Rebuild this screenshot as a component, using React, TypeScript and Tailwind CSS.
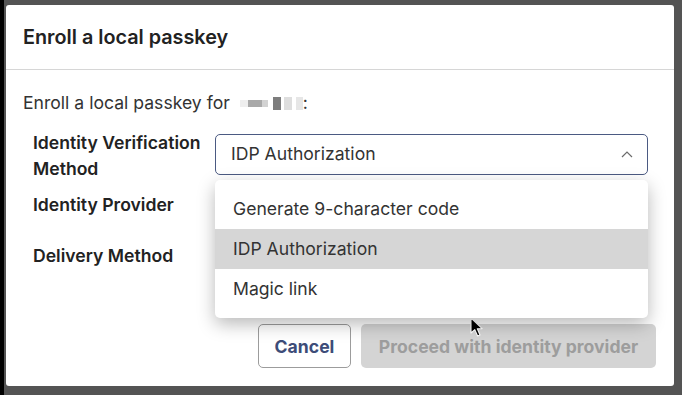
import React from 'react';

const OPTIONS = ['Generate 9-character code', 'IDP Authorization', 'Magic link'];

const ChevronUp = () => (
  <svg className="w-[12px] h-[7px]" viewBox="0 0 12 7" fill="none" stroke="#6b6b6b" strokeWidth="1.2">
    <path d="M1 6 L6 1 L11 6" />
  </svg>
);

const Cursor = () => (
  <svg className="absolute left-[466px] top-[317px] w-[14px] h-[21px]" viewBox="0 0 14 21">
    <path d="M1 1 L1 16 L4.8 12.6 L7.6 19 L10 18 L7.3 11.8 L12.2 11.6 Z" fill="#000" stroke="#fff" strokeWidth="1.1" strokeLinejoin="round" />
  </svg>
);

const App: React.FC = () => {
  return (
    <div className="relative w-[682px] h-[395px] bg-[#545454] border-l-[4px] border-black pl-[2px] pt-[5px] pr-[8px] pb-[9px] overflow-hidden font-['Inter',sans-serif]">
      <div className="h-full bg-white rounded-[3px] flex flex-col">
        {/* Header */}
        <div className="h-[65px] flex items-center pt-[2px] px-[17px] border-b border-[#d6d6d6]">
          <h2 className="text-[19.8px] font-semibold text-[#222]">Enroll a local passkey</h2>
        </div>

        {/* Body */}
        <div className="px-[17px] pt-[21px]">
          <p className="text-[17.6px] leading-[24px] text-[#333] flex items-center">
            Enroll a local passkey for
            <span className="inline-flex items-center ml-[10px]">
              <span className="w-[8px] h-[7px] bg-[#eeeeee]" />
              <span className="w-[14px] h-[7px] bg-[#a9a9a9]" />
              <span className="w-[6px] h-[7px] bg-[#d2d2d2]" />
              <span className="w-[8px] h-[13px] bg-[#7d7d7d] ml-[5px]" />
              <span className="w-[8px] h-[13px] bg-[#dedede] ml-[3px]" />
              <span className="w-[7px] h-[13px] bg-[#e6e6e6] ml-[4px]" />
            </span>
            <span>:</span>
          </p>

          <div className="pl-[10px] mt-[14px]">
            {/* Row 1 */}
            <div className="flex items-start">
              <label className="w-[182px] pt-[1px] text-[17.6px] leading-[26px] font-semibold text-[#222]">
                Identity Verification Method
              </label>
              <div className="relative w-[433px] mt-[5px]">
                <div className="h-[41px] border border-[#4b5a82] rounded-[5px] flex items-center justify-between pl-[15px] pr-[14px] text-[17.6px] text-[#333]">
                  <span>IDP Authorization</span>
                  <ChevronUp />
                </div>
                {/* Dropdown menu */}
                <div className="absolute z-20 left-0 right-0 top-[46px] bg-white rounded-[5px] pt-[9px] pb-[9px] shadow-[0_6px_18px_rgba(0,0,0,0.28)]">
                  {OPTIONS.map(opt => (
                    <div
                      key={opt}
                      className={`h-[40px] flex items-center px-[18px] text-[17.6px] text-[#333] ${opt === 'IDP Authorization' ? 'bg-[#d6d6d6]' : ''}`}
                    >
                      {opt}
                    </div>
                  ))}
                </div>
              </div>
            </div>

            {/* Row 2 */}
            <div className="flex items-start mt-[9px]">
              <label className="w-[182px] pt-[1px] text-[17.6px] leading-[26px] font-semibold text-[#222]">Identity Provider</label>
              <div className="w-[433px] mt-[5px] h-[41px] border border-[#bbb] rounded-[5px]" />
            </div>

            {/* Row 3 */}
            <div className="flex items-start mt-[5px]">
              <label className="w-[182px] pt-[1px] text-[17.6px] leading-[26px] font-semibold text-[#222]">Delivery Method</label>
              <div className="w-[433px] mt-[5px] h-[41px] border border-[#bbb] rounded-[5px]" />
            </div>
          </div>
        </div>

        {/* Footer */}
        <div className="flex justify-end gap-[10px] px-[18px] mt-[36px]">
          <button className="w-[93px] h-[44px] pt-[2px] border border-[#9c9c9c] rounded-[5px] text-[17.6px] font-bold text-[#3d4c78]">
            Cancel
          </button>
          <button disabled className="w-[295px] h-[44px] pt-[2px] bg-[#d4d4d4] rounded-[5px] text-[17.6px] font-bold text-[#9d9d9d]">
            Proceed with identity provider
          </button>
        </div>
      </div>
      <Cursor />
    </div>
  );
};

export default App;
